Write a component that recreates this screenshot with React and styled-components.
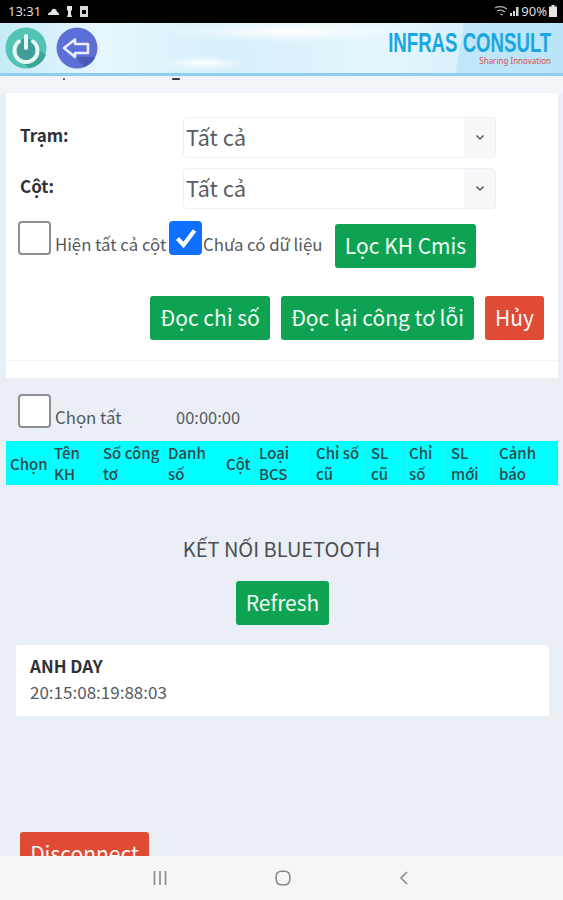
import React from 'react';
import styled, { createGlobalStyle } from 'styled-components';

const GlobalStyle = createGlobalStyle`
  html, body {
    margin: 0;
    padding: 0;
    background: #eaeff5;
  }
  * {
    box-sizing: border-box;
  }
`;

const Screen = styled.div`
  width: 563px;
  height: 900px;
  display: flex;
  flex-direction: column;
  overflow: hidden;
  font-family: "Noto Sans CJK SC", "Noto Sans", sans-serif;
  color: #3f4347;
`;

const StatusBar = styled.div`
  height: 23px;
  flex: none;
  background: #000;
  color: #dcdcdc;
  display: flex;
  align-items: center;
  justify-content: space-between;
  padding: 0 6px 1px 8px;
  font-family: "Noto Sans", sans-serif;
  font-size: 13px;
`;

const StatusGroup = styled.div`
  display: flex;
  align-items: center;
  gap: ${(p) => p.$gap || 4}px;
`;

const Header = styled.header`
  height: 53px;
  flex: none;
  display: flex;
  align-items: flex-start;
  justify-content: space-between;
  padding: 4px 12px 0 5px;
  border-bottom: 3px solid #8fcdf0;
  background:
    linear-gradient(100deg, transparent 0 81%, rgba(170, 222, 247, 0.55) 81.4% 100%),
    radial-gradient(ellipse 40px 7px at 205px 40px, rgba(255, 255, 255, 0.95), rgba(255, 255, 255, 0) 100%),
    radial-gradient(ellipse 130px 12px at 290px 8px, rgba(255, 255, 255, 0.95), rgba(255, 255, 255, 0) 100%),
    linear-gradient(90deg, #c6ebf8 0%, #e6f6fc 18%, #d6f0fb 40%, #e4f6fc 68%, #cdecf9 100%);
`;

const HeaderButtons = styled.div`
  display: flex;
  gap: 9px;
`;

const RoundIcon = styled.svg`
  width: 42px;
  height: 42px;
  display: block;
`;

const Brand = styled.div`
  display: flex;
  flex-direction: column;
  align-items: flex-end;
`;

const BrandName = styled.div`
  font-family: "Liberation Sans", Arial, sans-serif;
  font-size: 28px;
  line-height: 26px;
  margin-top: 3px;
  color: #1aa6e2;
  font-weight: 700;
  transform: scaleX(0.665);
  transform-origin: right center;
  white-space: nowrap;
`;

const BrandTag = styled.div`
  font-family: "Noto Sans", sans-serif;
  font-size: 8px;
  line-height: 8px;
  margin-top: 1px;
  color: #dc4a4a;
`;

const Content = styled.main`
  flex: 1;
  min-height: 0;
  overflow: hidden;
  display: flex;
  flex-direction: column;
  align-items: stretch;
`;

const ScrolledEdge = styled.div`
  height: 17px;
  flex: none;
  display: flex;
  padding-left: 63px;
  gap: 107px;
  background: #f1f4f8;
`;

const Speck = styled.span`
  width: ${(p) => p.$w}px;
  height: 2px;
  margin-top: 2px;
  background: #3a3a3a;
  border-radius: 1px;
`;

const FilterCard = styled.section`
  margin: 0 5px 0 6px;
  height: 285px;
  flex: none;
  background: #fff;
  display: flex;
  flex-direction: column;
  padding: 24px 13px 0 12px;
`;

const SelectRow = styled.div`
  display: flex;
  align-items: flex-start;
  height: 51px;
`;

const FieldLabel = styled.label`
  width: 165px;
  padding: 8px 0 0 2px;
  font-size: 17px;
  line-height: 20px;
  font-weight: 700;
  color: #2f3235;
`;

const SelectBox = styled.div`
  width: 313px;
  height: 41px;
  border: 1px solid #eef0f3;
  border-radius: 4px;
  display: flex;
  align-items: center;
  justify-content: space-between;
  font-size: 22px;
  line-height: 30px;
  color: #5a5e63;
  padding: 0 0 0 2px;
  overflow: hidden;
`;

const SelectValue = styled.span`
  margin-top: -3px;
`;

const SelectArrow = styled.span`
  width: 31px;
  align-self: stretch;
  background: #f7f8f9;
  display: flex;
  align-items: center;
  justify-content: center;
  color: #555;
`;

const CheckRow = styled.div`
  display: flex;
  align-items: flex-start;
  height: 49px;
  padding-top: 2px;
`;

const CheckBox = styled.span`
  width: 33px;
  height: 34px;
  flex: none;
  border-radius: 4px;
  border: ${(p) => (p.$checked ? 'none' : '2px solid #8d8f92')};
  background: ${(p) => (p.$checked ? '#0f6fff' : '#fff')};
  display: flex;
  align-items: center;
  justify-content: center;
`;

const CheckText = styled.span`
  font-size: 16.8px;
  line-height: 20px;
  color: #55595e;
  white-space: nowrap;
  margin-top: 13px;
  padding-left: ${(p) => p.$pad}px;
  width: ${(p) => p.$w}px;
  flex: none;
`;

const Button = styled.button`
  height: 44px;
  border: none;
  border-radius: 3px;
  background: ${(p) => (p.$danger ? '#e04b36' : '#0da353')};
  color: #f4fbf6;
  font-family: inherit;
  font-size: 21px;
  line-height: 28px;
  padding: 0 0 2px;
  width: ${(p) => p.$w}px;
  white-space: nowrap;
  flex: none;
`;

const FilterButton = styled(Button)`
  margin-top: 3px;
`;

const ActionRow = styled.div`
  display: flex;
  justify-content: flex-end;
  gap: 11px;
  margin: 28px 1px 0 0;
`;

const CardRule = styled.div`
  height: 1px;
  background: #f2f3f5;
  margin: 20px -13px 0 -12px;
`;

const SelectAllRow = styled.div`
  display: flex;
  align-items: flex-start;
  height: 34px;
  margin: 16px 0 13px 18px;
`;

const TimeText = styled.span`
  font-size: 16.5px;
  line-height: 20px;
  color: #55595e;
  margin-top: 13px;
`;

const MeterTable = styled.div`
  margin: 0 5px 0 6px;
  height: 44px;
  flex: none;
  background: #00ffff;
  display: grid;
  grid-template-columns: 44px 49px 65px 58px 33px 57px 55px 38px 42px 48px 1fr;
`;

const HeadCell = styled.div`
  font-size: 15px;
  line-height: 21px;
  font-weight: 500;
  color: #35484d;
  padding-left: 4px;
  display: flex;
  align-items: center;
  border-right: 1px solid #19eeee;
`;

const BluetoothSection = styled.section`
  display: flex;
  flex-direction: column;
  align-items: center;
  padding-top: 51px;
`;

const BluetoothTitle = styled.h2`
  margin: 0;
  font-size: 20px;
  line-height: 26px;
  font-weight: 400;
  color: #4a4e53;
`;

const RefreshButton = styled(Button)`
  margin: 19px 0 0 2px;
`;

const DeviceCard = styled.div`
  align-self: stretch;
  margin: 20px 14px 0 16px;
  height: 71px;
  background: #fff;
  border-radius: 3px;
  padding: 10px 14px;
`;

const DeviceName = styled.div`
  font-size: 17px;
  line-height: 22px;
  font-weight: 700;
  color: #2f3235;
`;

const DeviceAddress = styled.div`
  font-size: 17px;
  line-height: 20px;
  margin-top: 5px;
  color: #55595e;
`;

const DisconnectButton = styled(Button)`
  align-self: flex-start;
  margin: 116px 0 0 20px;
`;

const NavBar = styled.nav`
  height: 44px;
  flex: none;
  background: #f6f6f6;
  display: flex;
  align-items: center;
  justify-content: center;
  gap: 108px;
  padding: 0 1px 1px 0;
`;

const TableHead = [
  'Chọn', 'Tên KH', 'Số công tơ', 'Danh số', 'Cột', 'Loại BCS',
  'Chỉ số cũ', 'SL cũ', 'Chỉ số', 'SL mới', 'Cảnh báo',
];

const PowerIcon = () => (
  <RoundIcon viewBox="0 0 42 42">
    <circle cx="21" cy="21" r="20.5" fill="#52c3b5" />
    <path d="M21 14 L41 28 A20.5 20.5 0 0 1 24 41 L12 31 Z" fill="#3fa59a" />
    <circle cx="21" cy="22" r="10.5" fill="#3f9e98" />
    <path d="M14 14.5 A11.5 11.5 0 1 0 28 14.5" fill="none" stroke="#e8f6f4" strokeWidth="4" strokeLinecap="round" />
    <path d="M21 9 V21" stroke="#e8f6f4" strokeWidth="4" strokeLinecap="round" />
  </RoundIcon>
);

const BackIcon = () => (
  <RoundIcon viewBox="0 0 42 42">
    <circle cx="21" cy="21" r="20.5" fill="#5b6fd6" />
    <path d="M20 30 L38 30 L39 31 A20.5 20.5 0 0 1 28 40 Z" fill="#4a59b8" />
    <path d="M8 21 L19 12.5 V17 H32 V26 H19 V30 Z" fill="#5b6fd6" stroke="#e8ecfb" strokeWidth="2.6" strokeLinejoin="round" />
  </RoundIcon>
);

const Chevron = () => (
  <svg width="10" height="7" viewBox="0 0 10 7">
    <path d="M1.5 1.5 L5 5 L8.5 1.5" fill="none" stroke="currentColor" strokeWidth="1.5" />
  </svg>
);

const Tick = () => (
  <svg width="24" height="24" viewBox="0 0 24 24">
    <path d="M3.5 12.5 L9.5 19 L20.5 4.5" fill="none" stroke="#fff" strokeWidth="4.2" />
  </svg>
);

const App = () => (
  <Screen>
    <GlobalStyle />
    <StatusBar>
      <StatusGroup $gap={7}>
        <span>13:31</span>
        <svg width="11" height="7" viewBox="0 0 11 7"><path d="M0 7 Q0 4 3 4 Q4 0 7 1 Q9 2 9 4 Q11 4 11 7 Z" fill="#e4e4e4" /></svg>
        <svg width="7" height="11" viewBox="0 0 7 11"><path d="M1 0 H6 V4 L5 5 V8 L6 11 H1 L2 8 V5 L1 4 Z" fill="#e4e4e4" /></svg>
        <svg width="8" height="11" viewBox="0 0 8 11"><path fillRule="evenodd" d="M0 0 H8 V11 H0 Z M2 4 V8 H6 V4 Z" fill="#d8d8d8" /></svg>
      </StatusGroup>
      <StatusGroup $gap={2}>
        <svg width="13" height="10" viewBox="0 0 13 10"><path d="M0 2 Q6 -1 12 3 M2 5 Q6 3 10 6 M5 8 L8 9" fill="none" stroke="#b5b5b5" strokeWidth="1.3" /></svg>
        <svg width="9" height="10" viewBox="0 0 9 10"><path d="M0 7 H2 V10 H0 Z M3 5 H5 V10 H3 Z M6 1 H8.5 V10 H6 Z" fill="#d8d8d8" /></svg>
        <span>90%</span>
        <svg width="8" height="12" viewBox="0 0 8 12"><path d="M2.5 0 H5.5 V1.5 H8 V12 H0 V1.5 H2.5 Z" fill="#e4e4e4" /></svg>
      </StatusGroup>
    </StatusBar>
    <Header>
      <HeaderButtons>
        <PowerIcon />
        <BackIcon />
      </HeaderButtons>
      <Brand>
        <BrandName>INFRAS CONSULT</BrandName>
        <BrandTag>Sharing Innovation</BrandTag>
      </Brand>
    </Header>
    <Content>
      <ScrolledEdge>
        <Speck $w={2} />
        <Speck $w={8} />
      </ScrolledEdge>
      <FilterCard>
        <SelectRow>
          <FieldLabel>Trạm:</FieldLabel>
          <SelectBox><SelectValue>Tất cả</SelectValue><SelectArrow><Chevron /></SelectArrow></SelectBox>
        </SelectRow>
        <SelectRow>
          <FieldLabel>Cột:</FieldLabel>
          <SelectBox><SelectValue>Tất cả</SelectValue><SelectArrow><Chevron /></SelectArrow></SelectBox>
        </SelectRow>
        <CheckRow>
          <CheckBox />
          <CheckText $w={118} $pad={4}>Hiện tất cả cột</CheckText>
          <CheckBox $checked><Tick /></CheckBox>
          <CheckText $w={133} $pad={1}>Chưa có dữ liệu</CheckText>
          <FilterButton $w={141}>Lọc KH Cmis</FilterButton>
        </CheckRow>
        <ActionRow>
          <Button $w={120}>Đọc chỉ số</Button>
          <Button $w={193}>Đọc lại công tơ lỗi</Button>
          <Button $w={59} $danger>Hủy</Button>
        </ActionRow>
        <CardRule />
      </FilterCard>
      <SelectAllRow>
        <CheckBox />
        <CheckText $w={125} $pad={4}>Chọn tất</CheckText>
        <TimeText>00:00:00</TimeText>
      </SelectAllRow>
      <MeterTable>
        {TableHead.map((title) => (
          <HeadCell key={title}>{title}</HeadCell>
        ))}
      </MeterTable>
      <BluetoothSection>
        <BluetoothTitle>KẾT NỐI BLUETOOTH</BluetoothTitle>
        <RefreshButton $w={93}>Refresh</RefreshButton>
        <DeviceCard>
          <DeviceName>ANH DAY</DeviceName>
          <DeviceAddress>20:15:08:19:88:03</DeviceAddress>
        </DeviceCard>
        <DisconnectButton $w={129} $danger>Disconnect</DisconnectButton>
      </BluetoothSection>
    </Content>
    <NavBar>
      <svg width="14" height="14" viewBox="0 0 14 14"><path d="M1.5 0 V14 M7 0 V14 M12.5 0 V14" stroke="#888" strokeWidth="1.6" /></svg>
      <svg width="16" height="16" viewBox="0 0 16 16"><rect x="1.2" y="1.2" width="13.6" height="13.6" rx="5" fill="none" stroke="#888" strokeWidth="1.6" /></svg>
      <svg width="10" height="14" viewBox="0 0 10 14"><path d="M8 1 L2 7 L8 13" fill="none" stroke="#888" strokeWidth="1.6" /></svg>
    </NavBar>
  </Screen>
);

export default App;
